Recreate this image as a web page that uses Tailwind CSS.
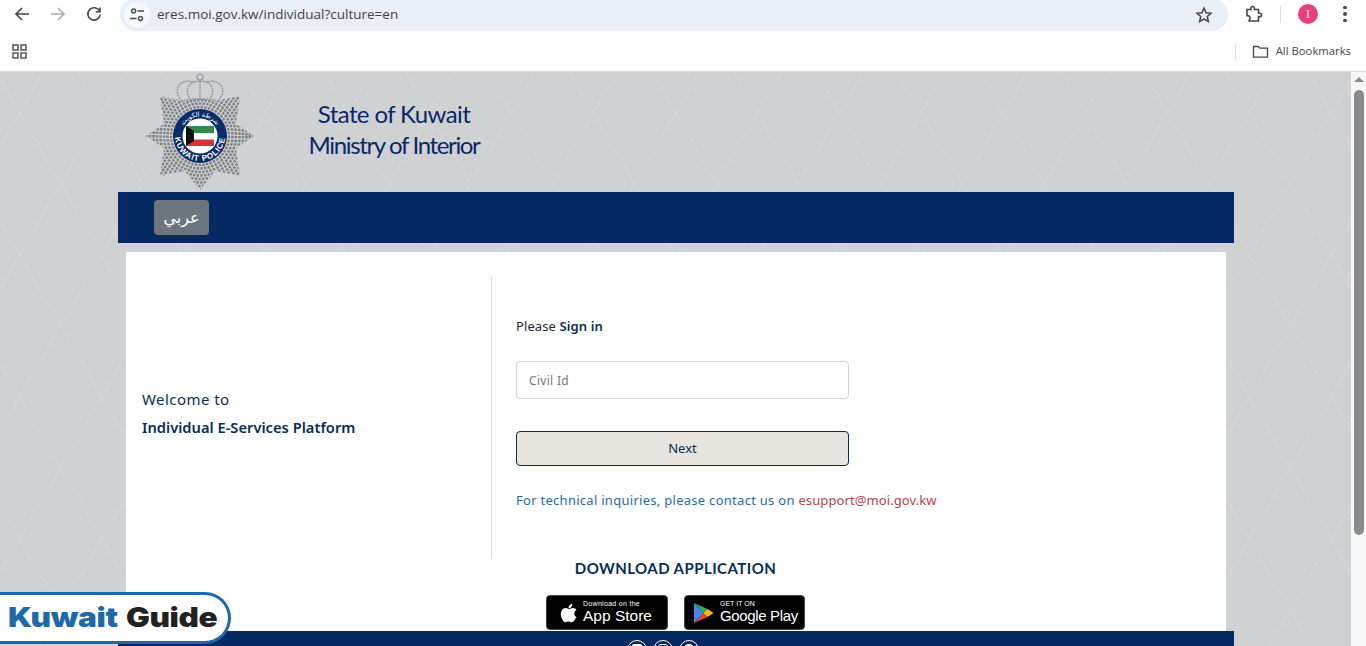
<!DOCTYPE html>
<html lang="en">
<head>
<meta charset="UTF-8">
<title>Individual E-Services Platform</title>
<script src="https://cdn.jsdelivr.net/npm/@tailwindcss/browser@4"></script>
</head>
<body class="h-[646px] overflow-hidden bg-white font-['Noto_Sans',sans-serif]">
<div class="relative flex h-[646px] flex-col overflow-hidden">

  <!-- browser toolbar -->
  <div class="flex h-[36px] shrink-0 items-start bg-white text-[#474747]">
    <div class="flex h-[28px] w-[120px] items-center pl-[13px] gap-[18px]">
      <svg class="size-[18px]" viewBox="0 0 18 18" fill="none" stroke="#474747" stroke-width="1.6"><path d="M16 9H3M9 3 3 9l6 6"/></svg>
      <svg class="size-[18px]" viewBox="0 0 18 18" fill="none" stroke="#a9abae" stroke-width="1.6"><path d="M2 9h13M9 3l6 6-6 6"/></svg>
      <svg class="size-[18px]" viewBox="0 0 18 18" fill="none" stroke="#474747" stroke-width="1.6"><path d="M14.6 6.2A6.2 6.2 0 1 0 15.2 9.5M15 2.6v4.2h-4.2"/></svg>
    </div>
    <div class="-mt-[2px] flex h-[33px] w-[1108px] items-center rounded-full bg-[#e9eff9] pl-[4px] pr-[15px]">
      <div class="flex size-[26px] items-center justify-center rounded-full bg-[#f8fafd]">
        <svg class="size-[16px]" viewBox="0 0 16 16" fill="none" stroke="#474747" stroke-width="1.4"><circle cx="4.6" cy="4" r="2"/><path d="M8.5 4H15M1 11.500h6.500"/><circle cx="11.500" cy="11.500" r="2"/></svg>
      </div>
      <span class="ml-[7px] flex-1 font-['Open_Sans',sans-serif] text-[13.5px] text-[#3f4347]">eres.moi.gov.kw/individual?culture=en</span>
      <svg class="size-[18px]" viewBox="0 0 18 18" fill="none" stroke="#474747" stroke-width="1.5"><path d="m9 2 2.100 4.700 5 .5-3.800 3.300 1.100 5L9 13l-4.400 2.500 1.100-5L1.900 7.200l5-.5z"/></svg>
    </div>
    <div class="flex h-[28px] flex-1 items-center pl-[17px]">
      <svg class="size-[18px]" viewBox="0 0 18 18" fill="none" stroke="#474747" stroke-width="1.6"><path d="M2 4.500h4V3.200a1.700 1.700 0 0 1 3.400 0v1.300h4.100v3.700h1.300a1.700 1.700 0 0 1 0 3.400h-1.300v4.400H4.100l.8-2.600c.5-1.500-.7-3-2.900-2.800z"/></svg>
      <div class="ml-[17px] h-[18px] w-px bg-[#d3e0f3]"></div>
      <div class="ml-[17px] flex size-[20px] items-center justify-center rounded-full bg-[#e8407c] text-[10px] text-white">I</div>
      <div class="ml-[25px] flex flex-col gap-[3px]">
        <span class="size-[3.500px] rounded-full bg-[#474747]"></span>
        <span class="size-[3.500px] rounded-full bg-[#474747]"></span>
        <span class="size-[3.500px] rounded-full bg-[#474747]"></span>
      </div>
    </div>
  </div>

  <!-- bookmarks bar -->
  <div class="flex h-[36px] shrink-0 items-center border-b border-[#dcdcdc] bg-white pb-[4px] pl-[12px] pr-[15px]">
    <svg class="size-[15px]" viewBox="0 0 15 15" fill="none" stroke="#474747" stroke-width="1.4"><rect x="1" y="1" width="5" height="5"/><rect x="9" y="1" width="5" height="5"/><rect x="1" y="9" width="5" height="5"/><rect x="9" y="9" width="5" height="5"/></svg>
    <div class="ml-auto h-[16px] w-px bg-[#d3e0f3]"></div>
    <svg class="ml-[16px] size-[17px]" viewBox="0 0 17 17" fill="none" stroke="#474747" stroke-width="1.3"><path d="M1.500 3.500h4.800l1.600 1.600h7.600v9H1.500z"/></svg>
    <span class="ml-[7px] font-['Open_Sans',sans-serif] text-[11.3px] text-[#474747]">All Bookmarks</span>
  </div>

  <!-- page viewport -->
  <div class="flex min-h-0 flex-1">
    <div class="min-w-0 flex-1 overflow-hidden bg-[#d0d1d3] bg-[repeating-linear-gradient(60deg,transparent_0,transparent_70px,rgba(255,255,255,.1)_70px,rgba(255,255,255,.1)_71px),repeating-linear-gradient(-60deg,transparent_0,transparent_70px,rgba(255,255,255,.1)_70px,rgba(255,255,255,.1)_71px)]">
      <div class="mx-auto ml-[118px] w-[1116px]">

        <header class="flex h-[120px] items-start">
          <svg class="ml-[27px] h-[119px] w-[110px]" viewBox="0 0 110 119">
            <defs>
              <clipPath id="star"><polygon points="109,64 91,76 95,104 70,99 55,118 40,99 15,104 19,76 1,64 19,52 15,24 40,29 55,10 70,29 95,24 91,52"/></clipPath>
              <path id="ringTop" d="M35.500 64a19.500 19.500 0 0 1 39 0"/>
              <path id="ringBottom" d="M30.500 59a25 25 0 1 0 49 0"/>
            </defs>
            <g clip-path="url(#star)" fill="none" stroke="#808286" stroke-width="2.600" stroke-dasharray="2.500 1.200">
              <circle cx="55" cy="64" r="29"/><circle cx="55" cy="64" r="32.500"/><circle cx="55" cy="64" r="36"/><circle cx="55" cy="64" r="39.500"/><circle cx="55" cy="64" r="43"/><circle cx="55" cy="64" r="46.500"/><circle cx="55" cy="64" r="50"/><circle cx="55" cy="64" r="53.500"/>
            </g>
            <g fill="#d0d1d3" stroke="#96989c" stroke-width="1.400" stroke-dasharray="2 .8">
              <path d="M37 29C26 17 36 6 48 10c3-1 11-1 14 0 12-4 22 7 11 19-10-3-26-3-36 0z"/>
              <path d="M46 28c-6-7-4-15 2-18M64 28c6-7 4-15-2-18M55 9v19" fill="none"/>
            </g>
            <circle cx="55" cy="5" r="3" fill="#d0d1d3" stroke="#96989c" stroke-width="1.200"/>
            <circle cx="55" cy="64" r="27" fill="#0a2c6a"/>
            <circle cx="55" cy="64" r="17.500" fill="#fff"/>
            <path d="M41 54h28v7H41z" fill="#2f8a4c"/>
            <path d="M41 61h28v6.500H41z" fill="#fff"/>
            <path d="M41 67.500h28V74H41z" fill="#d4343b"/>
            <path d="M41 54l8 5v10l-8 5z" fill="#111"/>
            <text class="font-['Liberation_Sans',sans-serif]" fill="#fff" font-size="8" font-weight="700" letter-spacing=".9"><textPath href="#ringBottom" startOffset="50%" text-anchor="middle">KUWAIT POLICE</textPath></text>
            <text class="font-['DejaVu_Sans',sans-serif]" fill="#fff" font-size="6.500"><textPath href="#ringTop" startOffset="50%" text-anchor="middle">شرطة الكويت</textPath></text>
          </svg>
          <div class="ml-[50px] mt-[27px] flex w-[178px] flex-col items-center font-['Lato',sans-serif] text-[#0a2868]">
            <span class="text-[24px] leading-[30px] tracking-[-0.6px]">State of Kuwait</span>
            <span class="text-[24px] leading-[31px] tracking-[-1.35px] whitespace-nowrap">Ministry of Interior</span>
          </div>
        </header>

        <nav class="flex h-[51px] items-center bg-[#062963] pl-[36px]">
          <a class="flex h-[35px] w-[55px] items-center justify-center rounded-[4px] bg-[#6c757d] font-['DejaVu_Sans',sans-serif] text-[16px] text-white">عربي</a>
        </nav>

        <main class="mx-[8px] mt-[9px] h-[379px] bg-white">
          <div class="flex pt-[24px]">
            <section class="flex h-[283px] w-[366px] flex-col justify-center border-r border-[#d9d9d9] pb-[9px] pl-[16px] text-[#0a2c56]">
              <p class="text-[15px] leading-[20px] tracking-[0.45px]">Welcome to</p>
              <p class="mt-[8px] text-[14.7px] leading-[20px] font-semibold">Individual E-Services Platform</p>
            </section>
            <section class="pl-[24px] pt-[41px]">
              <p class="text-[13px] leading-[18px] tracking-[0.1px] text-[#1f2933]">Please <b class="font-semibold text-[#0a2c56]">Sign in</b></p>
              <input class="mt-[26px] block h-[38px] w-[333px] rounded-[4px] border border-[#ced4da] px-[12px] text-[12px] tracking-[0.3px] placeholder:text-[#777]" placeholder="Civil Id">
              <button class="mt-[32px] block h-[35px] w-[333px] rounded-[4px] border border-[#0a2c56] bg-[#e7e5de] text-[13px] text-[#0a2c56]">Next</button>
              <p class="mt-[24px] text-[13px] leading-[20px] tracking-[0.28px] whitespace-nowrap text-[#2b6c9e]">For technical inquiries, please contact us on <span class="tracking-[0.1px] text-[#b5444f]">esupport@moi.gov.kw</span></p>
            </section>
          </div>
          <h2 class="mt-[-1px] ml-[-1px] text-center font-['Lato',sans-serif] text-[15px] leading-[20px] font-bold tracking-[0.45px] text-[#0a2c56]">DOWNLOAD APPLICATION</h2>
          <div class="mt-[17px] ml-[420px] flex gap-[16px]">
            <div class="flex h-[35px] w-[122px] items-center rounded-[4px] border border-[#444] bg-black pl-[13px] text-white">
              <svg class="h-[20px] w-[17px]" viewBox="0 0 17 20" fill="#fff"><path d="M12.300 1c.1 1.100-.3 2.100-1 2.900-.7.800-1.700 1.300-2.700 1.200-.1-1 .4-2.100 1-2.800C10.300 1.500 11.400 1 12.300 1zM15.900 14.400c-.4 1-.6 1.400-1.200 2.300-.8 1.200-1.800 2.600-3.100 2.600-1.200 0-1.500-.7-3-.7s-1.900.7-3.100.7c-1.300 0-2.300-1.300-3-2.500C.5 13.400.3 9.500 1.700 7.400c1-1.500 2.500-2.300 4-2.300s2.400.8 3.600.8 1.900-.8 3.600-.8c1.300 0 2.700.7 3.600 1.900-3.200 1.800-2.700 6.300.4 7.400z"/></svg>
              <div class="mb-[3px] ml-[6px] flex flex-col font-['Liberation_Sans',sans-serif]">
                <span class="text-[7px] leading-[9px] tracking-[0.3px]">Download on the</span>
                <span class="text-[15.5px] leading-[15px]">App Store</span>
              </div>
            </div>
            <div class="flex h-[35px] w-[121px] items-center rounded-[4px] border border-[#444] bg-black pl-[8px] text-white">
              <svg class="h-[22px] w-[21px]" viewBox="0 0 21 22"><path d="M1 1v10h9.500z" fill="#4285f4"/><path d="M1 21V11h9.500z" fill="#4285f4"/><path d="M1 1l9.500 10 4-4z" fill="#34a853"/><path d="M1 21l9.500-10 4 4z" fill="#ea4335"/><path d="M14.500 7l6 4-6 4-4-4z" fill="#fbbc04"/></svg>
              <div class="mb-[3px] ml-[6px] flex flex-col font-['Liberation_Sans',sans-serif]">
                <span class="text-[7px] leading-[9px]">GET IT ON</span>
                <span class="text-[15px] leading-[15px] tracking-[-0.35px]">Google Play</span>
              </div>
            </div>
          </div>
        </main>

        <footer class="flex h-[40px] justify-center gap-[6px] bg-[#062963] pr-[26px] pt-[9px]">
          <div class="flex size-[20px] justify-center rounded-full border border-white pt-[3px]"><div class="h-[8px] w-[10px] rounded-[2px] bg-white"></div></div>
          <div class="flex size-[20px] justify-center rounded-full border border-white pt-[3px]"><div class="size-[10px] rounded-[3px] border border-white"></div></div>
          <div class="flex size-[20px] justify-center rounded-full border border-white pt-[3px]"><div class="h-[7px] w-[10px] rounded-t-full bg-white"></div></div>
        </footer>
      </div>
    </div>

    <!-- scrollbar -->
    <div class="flex w-[15px] shrink-0 flex-col items-center bg-[#f8f8f8] pt-[5px]">
      <div class="size-0 border-x-[5px] border-b-[5px] border-x-transparent border-b-[#8b8b8b]"></div>
      <div class="mt-[8px] h-[445px] w-[10px] rounded-full bg-[#8b8b8b]"></div>
    </div>
  </div>

  <!-- watermark over the page corner -->
  <div class="absolute bottom-[2px] left-0 flex h-[52px] w-[231px] items-center rounded-r-[26px] border-y-[3px] border-r-[3px] border-[#1f69a8] bg-white pl-[8px]">
    <div class="origin-left scale-x-[1.17] font-['Inter',sans-serif] text-[27px] font-black tracking-[-0.3px] whitespace-nowrap">
      <span class="text-[#1f69a8]">Kuwait</span><span class="ml-[7px] text-[#222]">Guide</span>
    </div>
  </div>
</div>
</body>
</html>
